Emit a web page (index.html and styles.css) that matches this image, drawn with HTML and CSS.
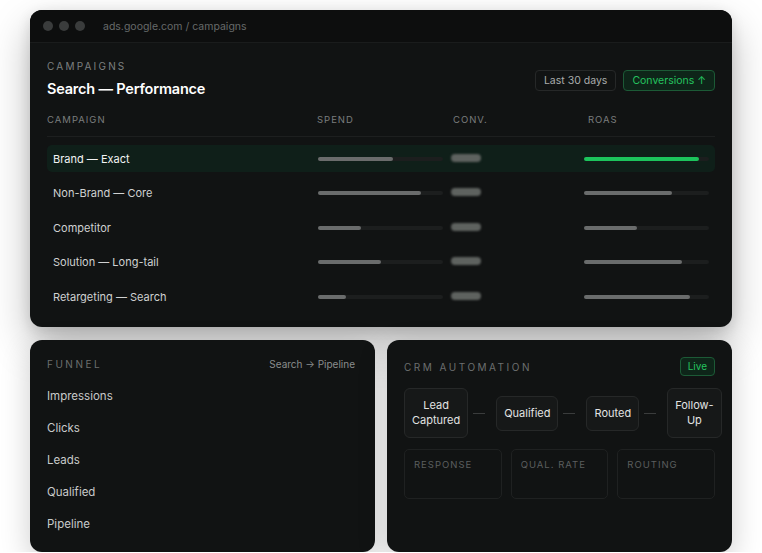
FILE: index.html
```html
<!DOCTYPE html>
<html lang="en">
<head>
  <meta charset="UTF-8" />
  <meta name="viewport" content="width=device-width, initial-scale=1.0"/>
  <title>Campaigns</title>
  <link rel="stylesheet" href="styles.css">
</head>
<body>
  <div class="page">
    <div class="window">
      <div class="titlebar">
        <span class="dot"></span>
        <span class="dot"></span>
        <span class="dot"></span>
        <span class="url">ads.google.com / campaigns</span>
      </div>

      <div class="content">
        <div class="head">
          <div>
            <div class="eyebrow">CAMPAIGNS</div>
            <h1 class="title">Search — Performance</h1>
          </div>
          <div class="actions">
            <span class="chip">Last 30 days</span>
            <span class="chip chip-green">Conversions ↑</span>
          </div>
        </div>

        <div class="table-head">
          <span>CAMPAIGN</span>
          <span>SPEND</span>
          <span>CONV.</span>
          <span>ROAS</span>
        </div>

        <div class="rows">
          <div class="row active">
            <span class="name">Brand — Exact</span>
            <div class="bar"><div class="fill" style="width: 60%"></div></div>
            <span class="pill"></span>
            <div class="bar"><div class="fill green" style="width: 92%"></div></div>
          </div>
          <div class="row">
            <span class="name">Non-Brand — Core</span>
            <div class="bar"><div class="fill" style="width: 82%"></div></div>
            <span class="pill"></span>
            <div class="bar"><div class="fill" style="width: 70%"></div></div>
          </div>
          <div class="row">
            <span class="name">Competitor</span>
            <div class="bar"><div class="fill" style="width: 34%"></div></div>
            <span class="pill"></span>
            <div class="bar"><div class="fill" style="width: 42%"></div></div>
          </div>
          <div class="row">
            <span class="name">Solution — Long-tail</span>
            <div class="bar"><div class="fill" style="width: 50%"></div></div>
            <span class="pill"></span>
            <div class="bar"><div class="fill" style="width: 78%"></div></div>
          </div>
          <div class="row">
            <span class="name">Retargeting — Search</span>
            <div class="bar"><div class="fill" style="width: 22%"></div></div>
            <span class="pill"></span>
            <div class="bar"><div class="fill" style="width: 85%"></div></div>
          </div>
        </div>
      </div>
    </div>

    <div class="bottom">
      <div class="panel">
        <div class="panel-head">
          <span class="eyebrow">FUNNEL</span>
          <span class="sub">Search → Pipeline</span>
        </div>
        <ul class="funnel">
          <li>Impressions</li>
          <li>Clicks</li>
          <li>Leads</li>
          <li>Qualified</li>
          <li>Pipeline</li>
        </ul>
      </div>

      <div class="panel">
        <div class="panel-head crm-head">
          <span class="eyebrow">CRM AUTOMATION</span>
          <span class="live">Live</span>
        </div>
        <div class="flow">
          <div class="node">Lead<br>Captured</div>
          <span class="link"></span>
          <div class="node">Qualified</div>
          <span class="link"></span>
          <div class="node">Routed</div>
          <span class="link"></span>
          <div class="node">Follow-<br>Up</div>
        </div>
        <div class="stats">
          <div class="stat">RESPONSE</div>
          <div class="stat">QUAL. RATE</div>
          <div class="stat">ROUTING</div>
        </div>
      </div>
    </div>
  </div>
</body>
</html>
```

FILE: styles.css
```css
* {
  box-sizing: border-box;
  font-family: 'Inter', 'Noto Sans', sans-serif;
}

body {
  background: #ffffff;
  margin: 0;
  padding: 0;
  overflow: hidden;
}

.page {
  width: 762px;
  padding: 10px 30px 0;
}

.window {
  background: #111313;
  border-radius: 12px;
  height: 317px;
  overflow: hidden;
  box-shadow: 0 18px 40px rgba(0,0,0,0.28), 0 4px 14px rgba(0,0,0,0.12);
}

.titlebar {
  height: 33px;
  background: #0d0e0e;
  border-bottom: 1px solid #1a1c1c;
  display: flex;
  align-items: center;
  gap: 6px;
  padding: 0 13px;
}

.dot {
  width: 10px;
  height: 10px;
  border-radius: 50%;
  background: #3a3c3c;
}

.url {
  margin-left: 12px;
  font-size: 10.5px;
  color: #676a6a;
}

.content {
  padding: 17px 17px 0;
}

.head {
  display: flex;
  justify-content: space-between;
  align-items: center;
}

.eyebrow {
  font-size: 10px;
  letter-spacing: 2.2px;
  color: #7d8080;
  line-height: 12px;
}

.title {
  margin: 8px 0 0;
  font-size: 14.5px;
  line-height: 18px;
  font-weight: 600;
  color: #ffffff;
  letter-spacing: -0.2px;
}

.actions {
  display: flex;
  gap: 7px;
  padding-top: 3px;
}

.chip {
  height: 21px;
  line-height: 19px;
  padding: 0 8px;
  border: 1px solid #262828;
  border-radius: 4px;
  font-size: 10.5px;
  color: #a9acac;
}

.chip-green {
  background: #0e2519;
  border-color: #1c5a36;
  color: #25c35f;
}

.table-head {
  display: grid;
  grid-template-columns: 270px 136px 135px 1fr;
  margin-top: 16px;
  padding-bottom: 10px;
  border-bottom: 1px solid #1d1f1f;
  font-size: 9.5px;
  letter-spacing: 1px;
  color: #7a7d7d;
  line-height: 12px;
}

.rows {
  display: flex;
  flex-direction: column;
  gap: 7.5px;
  margin-top: 8px;
}

.row {
  display: grid;
  grid-template-columns: 265px 133px 133px 125px;
  align-items: center;
  height: 27px;
  padding: 0 6px;
  border-radius: 5px;
}

.row.active {
  background: #0f1f19;
}

.name {
  font-size: 11px;
  color: #cfd1d1;
}

.row.active .name {
  color: #f2f3f3;
}

.bar {
  width: 125px;
  height: 4px;
  border-radius: 2px;
  background: #1c1e1e;
}

.fill {
  height: 100%;
  border-radius: 2px;
  background: #6a6c6c;
}

.fill.green {
  background: #1cc45c;
}

.pill {
  width: 30px;
  height: 8px;
  margin-top: -2px;
  border-radius: 5px;
  background: #5e625f;
  filter: blur(1px);
}

.bottom {
  display: grid;
  grid-template-columns: 345px 345px;
  gap: 12px;
  margin-top: 13px;
}

.panel {
  background: #111313;
  border-radius: 12px;
  height: 212px;
  padding: 17px 17px 0;
  box-shadow: 0 10px 30px rgba(0,0,0,0.2);
}

.panel-head {
  display: flex;
  justify-content: space-between;
  align-items: center;
  height: 14px;
}

.panel-head .eyebrow {
  letter-spacing: 2.5px;
  color: #6c6f6f;
}

.sub {
  font-size: 10px;
  color: #8a8d8d;
  margin-right: 3px;
}

.funnel {
  list-style: none;
  margin: 9px 0 0;
  padding: 0;
}

.funnel li {
  line-height: 32px;
  font-size: 11.5px;
  color: #c8caca;
}

.crm-head {
  height: 19px;
}

.live {
  height: 19px;
  line-height: 17px;
  padding: 0 7px;
  border: 1px solid #1c5a36;
  background: #0e2519;
  border-radius: 4px;
  font-size: 10px;
  color: #25c35f;
}

.flow {
  display: flex;
  align-items: center;
  margin-top: 12px;
  margin-right: -5px;
}

.node {
  flex-shrink: 0;
  padding: 9px 7px;
  background: #161818;
  border: 1px solid #262828;
  border-radius: 6px;
  font-size: 11px;
  line-height: 15px;
  text-align: center;
  color: #e2e3e3;
}

.link {
  flex-shrink: 0;
  width: 12px;
  height: 1px;
  margin: 0 11px 0 5px;
  background: #3a3c3c;
}

.stats {
  display: grid;
  grid-template-columns: repeat(3, 1fr);
  gap: 9px;
  margin-top: 11px;
}

.stat {
  height: 50px;
  padding: 9px 9px;
  border: 1px solid #1f2121;
  border-radius: 5px;
  font-size: 9.5px;
  letter-spacing: 1px;
  color: #5b5e5e;
  line-height: 11px;
}
```
